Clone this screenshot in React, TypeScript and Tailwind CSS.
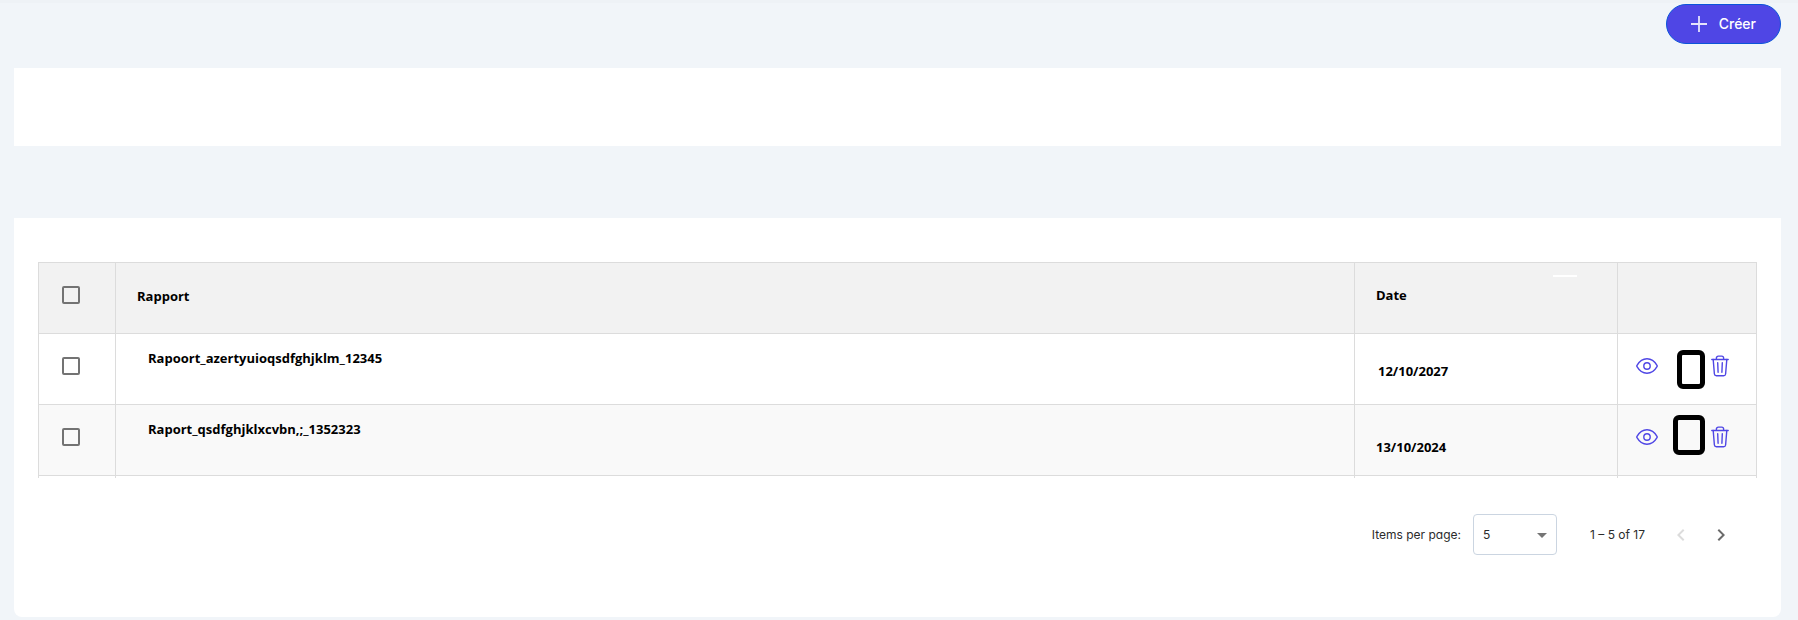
import React, { useState } from 'react';

interface ReportRow {
  id: number;
  name: string;
  date: string;
  dateClass: string;
  slotClass: string;
}

const rows: ReportRow[] = [
  {
    id: 1,
    name: 'Rapoort_azertyuioqsdfghjklm_12345',
    date: '12/10/2027',
    dateClass: 'pt-[27px] pl-[23px]',
    slotClass: 'mt-4 ml-[19px] w-7 h-[39px]',
  },
  {
    id: 2,
    name: 'Raport_qsdfghjklxcvbn,;_1352323',
    date: '13/10/2024',
    dateClass: 'pt-8 pl-[21px]',
    slotClass: 'mt-[10px] ml-[15px] w-8 h-10',
  },
];

const EyeIcon = () => (
  <svg width="22" height="18" viewBox="0 0 22 18" fill="none" stroke="currentColor" strokeWidth="1.4">
    <path d="M1 9.700a1.400 1.400 0 0 1 0-1.400C3.400 4.200 7 1.700 11 1.700s7.600 2.500 10 6.600a1.400 1.400 0 0 1 0 1.400C18.600 13.800 15 16.300 11 16.300S3.400 13.800 1 9.700Z" />
    <circle cx="11" cy="9" r="3.200" />
  </svg>
);

const TrashIcon = () => (
  <svg
    width="18"
    height="22"
    viewBox="0 0 18 22"
    fill="none"
    stroke="currentColor"
    strokeWidth="1.4"
    strokeLinecap="round"
    strokeLinejoin="round"
  >
    <path d="M.8 4.500h16.400M5.400 4.500V3a1.900 1.900 0 0 1 1.900-1.900h3.400A1.900 1.900 0 0 1 12.600 3v1.500" />
    <path d="M2.200 4.500 3.400 19a2 2 0 0 0 2 1.800h7.200a2 2 0 0 0 2-1.800l1.200-14.500" />
    <path d="M6.700 7.700 7.100 17.300M11.300 7.700l-.4 9.600" />
  </svg>
);

const Checkbox: React.FC<{ label: string; checked: boolean; onChange: () => void }> = ({
  label,
  checked,
  onChange,
}) => (
  <input
    type="checkbox"
    aria-label={label}
    checked={checked}
    onChange={onChange}
    className="block appearance-none w-[18px] h-[18px] border-2 border-[#737373] rounded-xs checked:bg-[#4f46e5] checked:border-[#4f46e5]"
  />
);

const App: React.FC = () => {
  const [selected, setSelected] = useState<number[]>([]);
  const [pageSize, setPageSize] = useState('5');

  const toggle = (id: number) =>
    setSelected((prev) => (prev.includes(id) ? prev.filter((x) => x !== id) : [...prev, id]));

  const allSelected = selected.length === rows.length;

  return (
    <div className="min-h-screen bg-slate-100 font-['Inter',sans-serif] border-t-3 border-[#eef2f6] pl-[14px] pr-[17px] pt-px pb-[3px]">
      <div className="flex justify-end">
        <button
          type="button"
          className="flex items-center gap-3 h-10 px-6 rounded-full border border-[#0b55d9] bg-[#4f46e5] text-white text-sm font-medium"
        >
          <svg width="16" height="16" viewBox="0 0 16 16" stroke="#fff" strokeOpacity="0.85" strokeWidth="1.800">
            <path d="M8 0v16M0 8h16" />
          </svg>
          <span>Créer</span>
        </button>
      </div>

      <div className="mt-6 h-[78px] bg-white" />

      <main className="mt-[72px] bg-white rounded-b-lg px-6 pt-11 pb-[62px]">
        <table className="w-full table-fixed border-separate border-spacing-0 border-t border-l border-[#dcdcdc] font-['Open_Sans',sans-serif] text-[13px] leading-5 font-bold text-black text-left">
          <colgroup>
            <col className="w-[77px]" />
            <col />
            <col className="w-[263px]" />
            <col className="w-[139px]" />
          </colgroup>
          <thead>
            <tr className="bg-[#f2f2f2]">
              <th className="h-[71px] align-top border-r border-b border-[#dcdcdc] pt-[23px] pl-[23px]">
                <Checkbox
                  label="Tout sélectionner"
                  checked={allSelected}
                  onChange={() => setSelected(allSelected ? [] : rows.map((r) => r.id))}
                />
              </th>
              <th className="align-top border-r border-b border-[#dcdcdc] pt-[23px] pl-[21px]">Rapport</th>
              <th className="relative align-top border-r border-b border-[#dcdcdc] pt-[22px] pl-[21px]">
                Date
                <span className="absolute top-3 right-10 w-6 h-0.5 bg-white" />
              </th>
              <th className="border-r border-b border-[#dcdcdc]" aria-label="Actions" />
            </tr>
          </thead>
          <tbody>
            {rows.map((row) => (
              <tr key={row.id} className="even:bg-[#f9f9f9]">
                <td className="h-[71px] align-top border-r border-b border-[#dcdcdc] pt-[23px] pl-[23px]">
                  <Checkbox label={row.name} checked={selected.includes(row.id)} onChange={() => toggle(row.id)} />
                </td>
                <td className="align-top border-r border-b border-[#dcdcdc] pt-[14px] pl-8">{row.name}</td>
                <td className={`align-top border-r border-b border-[#dcdcdc] ${row.dateClass}`}>{row.date}</td>
                <td className="align-top border-r border-b border-[#dcdcdc] text-[#4f46e5]">
                  <div className="flex items-start pl-[18px]">
                    <button type="button" aria-label="Voir" className="mt-[23px]">
                      <EyeIcon />
                    </button>
                    <button
                      type="button"
                      aria-label="Modifier"
                      className={`border-[5px] border-black rounded-md ${row.slotClass}`}
                    />
                    <button type="button" aria-label="Supprimer" className="mt-[21px] ml-[6px]">
                      <TrashIcon />
                    </button>
                  </div>
                </td>
              </tr>
            ))}
            <tr aria-hidden="true">
              <td className="h-0.5 p-0 border-r border-[#dcdcdc]" />
              <td className="p-0 border-r border-[#dcdcdc]" />
              <td className="p-0 border-r border-[#dcdcdc]" />
              <td className="p-0 border-r border-[#dcdcdc]" />
            </tr>
          </tbody>
        </table>

        <div className="mt-9 pr-6 flex items-center justify-end text-xs text-[#2b2b2b] [font-feature-settings:'cv11']">
          <label htmlFor="page-size">Items per page:</label>
          <div className="relative ml-3">
            <select
              id="page-size"
              value={pageSize}
              onChange={(e) => setPageSize(e.target.value)}
              className="block appearance-none w-[84px] h-[41px] pl-[9px] border border-[#cbd5e1] rounded bg-white"
            >
              <option>5</option>
              <option>10</option>
              <option>20</option>
            </select>
            <svg
              className="absolute right-[10px] top-[19px] pointer-events-none"
              width="10"
              height="5"
              viewBox="0 0 10 5"
              fill="#757575"
            >
              <path d="M0 0h10L5 5z" />
            </svg>
          </div>
          <span className="ml-[33px]">1 – 5 of 17</span>
          <button type="button" disabled aria-label="Page précédente" className="ml-6">
            <svg width="24" height="24" viewBox="0 0 24 24" fill="#dcdcdc">
              <path d="M15.410 7.410 14 6l-6 6 6 6 1.410-1.410L10.830 12z" />
            </svg>
          </button>
          <button type="button" aria-label="Page suivante" className="ml-4">
            <svg width="24" height="24" viewBox="0 0 24 24" fill="#6b6b6b">
              <path d="M10 6 8.590 7.410 13.170 12l-4.580 4.590L10 18l6-6z" />
            </svg>
          </button>
        </div>
      </main>
    </div>
  );
};

export default App;
